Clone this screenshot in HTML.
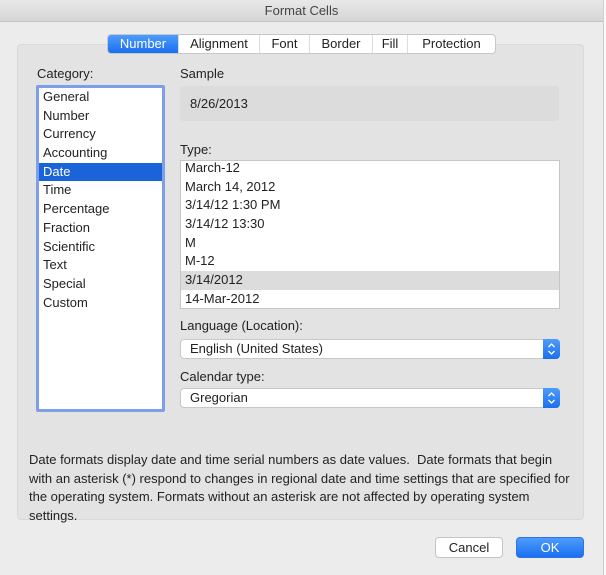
<!DOCTYPE html>
<html><head><style>
*{margin:0;padding:0;box-sizing:border-box}
body{width:606px;height:575px;background:#ececec;font-family:"Liberation Sans",sans-serif;font-size:13px;color:#222;position:relative;overflow:hidden}
.abs{position:absolute}
.title{left:0;top:0;width:603px;height:22px;background:linear-gradient(#e8e8e8,#d6d6d6);border-bottom:1px solid #c4c4c4;text-align:center;line-height:22px;font-size:13px;color:#444}
.edge{left:603px;top:0;width:3px;height:575px;background:#fafafa;border-left:1px solid #cfcfcf}
.panel{left:17px;top:44px;width:567px;height:476px;background:#e3e3e3;border:1px solid #d9d9d9;border-radius:4px}
.tabs{left:107px;top:34px;height:20px;display:flex;border:1px solid #c8c8c8;border-radius:4px;background:#fff;overflow:hidden;font-size:13px}
.tabs div{line-height:18px;border-right:1px solid #ddd;color:#222;text-align:center}
.tabs div:last-child{border-right:none}
.tabs .on{background:linear-gradient(#4d9cfb,#1a6ff0);color:#fff}
.lbl{font-size:13px;color:#222}
.cat{left:36px;top:85px;width:129px;height:327px;background:#fff;border:3px solid #7d9ee8;border-radius:2px}
.row{height:18.7px;line-height:18.7px;padding-left:4px;font-size:13px}
.sel{background:#1a63d9;color:#fff}
.sample{left:180px;top:86px;width:379px;height:35px;background:#dcdcdc;border-radius:3px;padding-left:10px;line-height:35px;font-size:13px}
.type{left:180px;top:160px;width:380px;height:149px;background:#fff;border:1px solid #c6c6c6;overflow:hidden}
.type .row{padding-left:4px}
.gsel{background:#dcdcdc}
.pop{width:380px;height:20px;background:#fff;border:1px solid #c8c8c8;border-radius:4px;line-height:18px;padding-left:9px;font-size:13px}
.arr{position:absolute;right:-1px;top:-1px;width:17px;height:20px;background:linear-gradient(#4d9cfb,#1a6ff0);border-radius:0 4px 4px 0}
.desc{left:29px;top:451px;width:545px;font-size:13px;line-height:18.7px;color:#222}
.btn{height:21px;border-radius:4px;text-align:center;line-height:19px;font-size:13px}
</style></head><body>
<div class="abs title">Format Cells</div>
<div class="abs edge"></div>
<div class="abs panel"></div>
<div class="abs tabs"><div class="on" style="width:71px">Number</div><div style="width:81px">Alignment</div><div style="width:50px">Font</div><div style="width:63px">Border</div><div style="width:35px">Fill</div><div style="width:87px">Protection</div></div>
<div class="abs lbl" style="left:37px;top:66px">Category:</div>
<div class="abs lbl" style="left:180px;top:66px">Sample</div>
<div class="abs cat">
<div class="row">General</div><div class="row">Number</div><div class="row">Currency</div><div class="row">Accounting</div><div class="row sel">Date</div><div class="row">Time</div><div class="row">Percentage</div><div class="row">Fraction</div><div class="row">Scientific</div><div class="row">Text</div><div class="row">Special</div><div class="row">Custom</div>
</div>
<div class="abs sample">8/26/2013</div>
<div class="abs lbl" style="left:180px;top:142px">Type:</div>
<div class="abs type"><div style="margin-top:-2px">
<div class="row">March-12</div><div class="row">March 14, 2012</div><div class="row">3/14/12 1:30 PM</div><div class="row">3/14/12 13:30</div><div class="row">M</div><div class="row">M-12</div><div class="row gsel">3/14/2012</div><div class="row">14-Mar-2012</div>
</div></div>
<div class="abs lbl" style="left:180px;top:318px">Language (Location):</div>
<div class="abs pop" style="left:180px;top:339px">English (United States)<div class="arr"><svg width="17" height="20"><path d="M5.5 8 L8.5 5 L11.5 8 M5.5 12 L8.5 15 L11.5 12" stroke="#fff" stroke-width="1.3" fill="none"/></svg></div></div>
<div class="abs lbl" style="left:180px;top:369px">Calendar type:</div>
<div class="abs pop" style="left:180px;top:388px">Gregorian<div class="arr"><svg width="17" height="20"><path d="M5.5 8 L8.5 5 L11.5 8 M5.5 12 L8.5 15 L11.5 12" stroke="#fff" stroke-width="1.3" fill="none"/></svg></div></div>
<div class="abs desc">Date formats display date and time serial numbers as date values.&nbsp; Date formats that begin with an asterisk (*) respond to changes in regional date and time settings that are specified for the operating system. Formats without an asterisk are not affected by operating system settings.</div>
<div class="abs btn" style="left:435px;top:537px;width:68px;background:#fff;border:1px solid #c4c4c4">Cancel</div>
<div class="abs btn" style="left:516px;top:537px;width:68px;background:linear-gradient(#4d9cfb,#1a6ff0);color:#fff;border:1px solid #2a74e8">OK</div>
</body></html>
